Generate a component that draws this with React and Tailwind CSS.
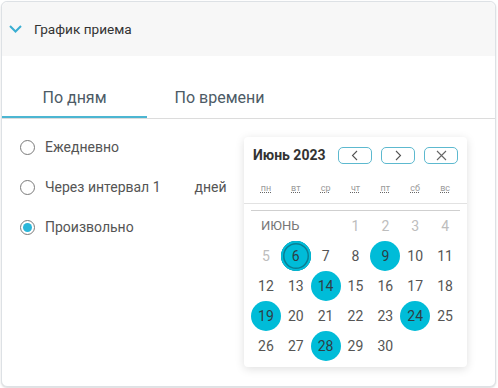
import React, { useState } from 'react'

const weekDays = ['пн', 'вт', 'ср', 'чт', 'пт', 'сб', 'вс']
const selected = [6, 9, 14, 19, 24, 28]

function Radio({ checked, children }) {
  return (
    <div className="h-[40px] flex items-center gap-[10px]">
      <span className="w-[15px] h-[15px] rounded-full border border-[#7a7a7a] flex items-center justify-center">
        {checked && <span className="w-[9px] h-[9px] rounded-full bg-[#2bb6d9]" />}
      </span>
      {children}
    </div>
  )
}

function NavBtn({ children }) {
  return (
    <button className="w-[34px] h-[17px] rounded-[5px] border border-[#5db9cf] flex items-center justify-center text-[#666]">
      {children}
    </button>
  )
}

function Calendar() {
  const cells = []
  for (let d = 1; d <= 30; d++) cells.push(d)
  return (
    <div className="absolute left-[242px] top-[18px] w-[223px] h-[230px] bg-white rounded-sm shadow-[0_2px_10px_rgba(0,0,0,0.13)]">
      <div className="flex items-center pt-[10px] px-[9px] h-[27px]">
        <span className="text-[14px] leading-[17px] font-bold text-[#333]">Июнь 2023</span>
        <div className="ml-auto flex gap-[9px]">
          <NavBtn>
            <svg width="8" height="11" viewBox="0 0 8 11" fill="none" stroke="#555" strokeWidth="1.1"><path d="M6 1 L1.5 5.5 L6 10" /></svg>
          </NavBtn>
          <NavBtn>
            <svg width="8" height="11" viewBox="0 0 8 11" fill="none" stroke="#555" strokeWidth="1.1"><path d="M2 1 L6.5 5.5 L2 10" /></svg>
          </NavBtn>
          <NavBtn>
            <svg width="11" height="11" viewBox="0 0 11 11" fill="none" stroke="#666" strokeWidth="1.1"><path d="M1 1 L10 10 M10 1 L1 10" /></svg>
          </NavBtn>
        </div>
      </div>
      <div className="mt-[17px] pb-[8px] border-b border-[#e2e2e2]">
        <div className="grid grid-cols-7 px-[7px]">
          {weekDays.map(w => (
            <div key={w} className="text-center h-[14px] leading-[14px] text-[9px]">
              <abbr className="text-[#9a9a9a] underline decoration-dotted decoration-[#666]">{w}</abbr>
            </div>
          ))}
        </div>
      </div>
      <div className="h-px bg-[#cfcfcf] mx-[7px] mt-[6px]" />
      <div className="grid grid-cols-7 px-[7px] text-[14px]">
        <div className="col-span-3 h-[30px] flex items-center pl-[10px] text-[13px] text-[#777]">ИЮНЬ</div>
        {cells.map(d => {
          const isSel = selected.includes(d)
          const faded = d <= 5
          return (
            <div key={d} className="h-[30px] flex items-center justify-center">
              <span
                className={
                  'w-[30px] h-[30px] rounded-full flex items-center justify-center ' +
                  (isSel ? 'bg-[#00bcd8] text-[#2d3e46] ' : '') +
                  (d === 6 ? 'shadow-[inset_0_0_0_2px_#00bcd8,inset_0_0_0_3.5px_#0b7f93] ' : '') +
                  (faded ? 'text-[#bdbdbd]' : isSel ? '' : 'text-[#555]')
                }
              >
                {d}
              </span>
            </div>
          )
        })}
      </div>
    </div>
  )
}

export default function App() {
  const [tab, setTab] = useState(0)
  return (
    <div className="w-[498px] h-[388px] bg-white pt-px pl-px" style={{ fontFamily: 'Roboto, "Liberation Sans", sans-serif' }}>
      <div className="w-[495px] h-[386px] border border-[#dde1e5] rounded-md shadow-[0_1px_2px_rgba(0,0,0,0.15)] overflow-hidden flex flex-col bg-white">
        <div className="h-[54px] bg-[#f7f7f7] rounded-t-md flex items-center pl-[7px] gap-[12px] shrink-0">
          <svg width="13" height="8" viewBox="0 0 13 8" fill="none" stroke="#3aaed2" strokeWidth="2"><path d="M1 1 L6.5 6.5 L12 1" /></svg>
          <span className="text-[13.6px] text-[#333]">График приема</span>
        </div>
        <div className="pt-[24px] flex border-b border-[#dcdcdc] shrink-0">
          {['По дням', 'По времени'].map((t, i) => (
            <button
              key={t}
              onClick={() => setTab(i)}
              className={
                'w-[145px] h-[38px] text-[16px] text-[#4d5b66] border-b-2 ' +
                (tab === i ? 'border-[#4cb6d2]' : 'border-transparent')
              }
            >
              {t}
            </button>
          ))}
        </div>
        <div className="relative flex-1">
          <div className="pl-[18px] pt-[8px] text-[14px] text-[#555]">
            <Radio>Ежедневно</Radio>
            <Radio>
              <span>Через интервал 1</span>
              <span className="ml-[24px]">дней</span>
            </Radio>
            <Radio checked>Произвольно</Radio>
          </div>
          <Calendar />
        </div>
      </div>
    </div>
  )
}
